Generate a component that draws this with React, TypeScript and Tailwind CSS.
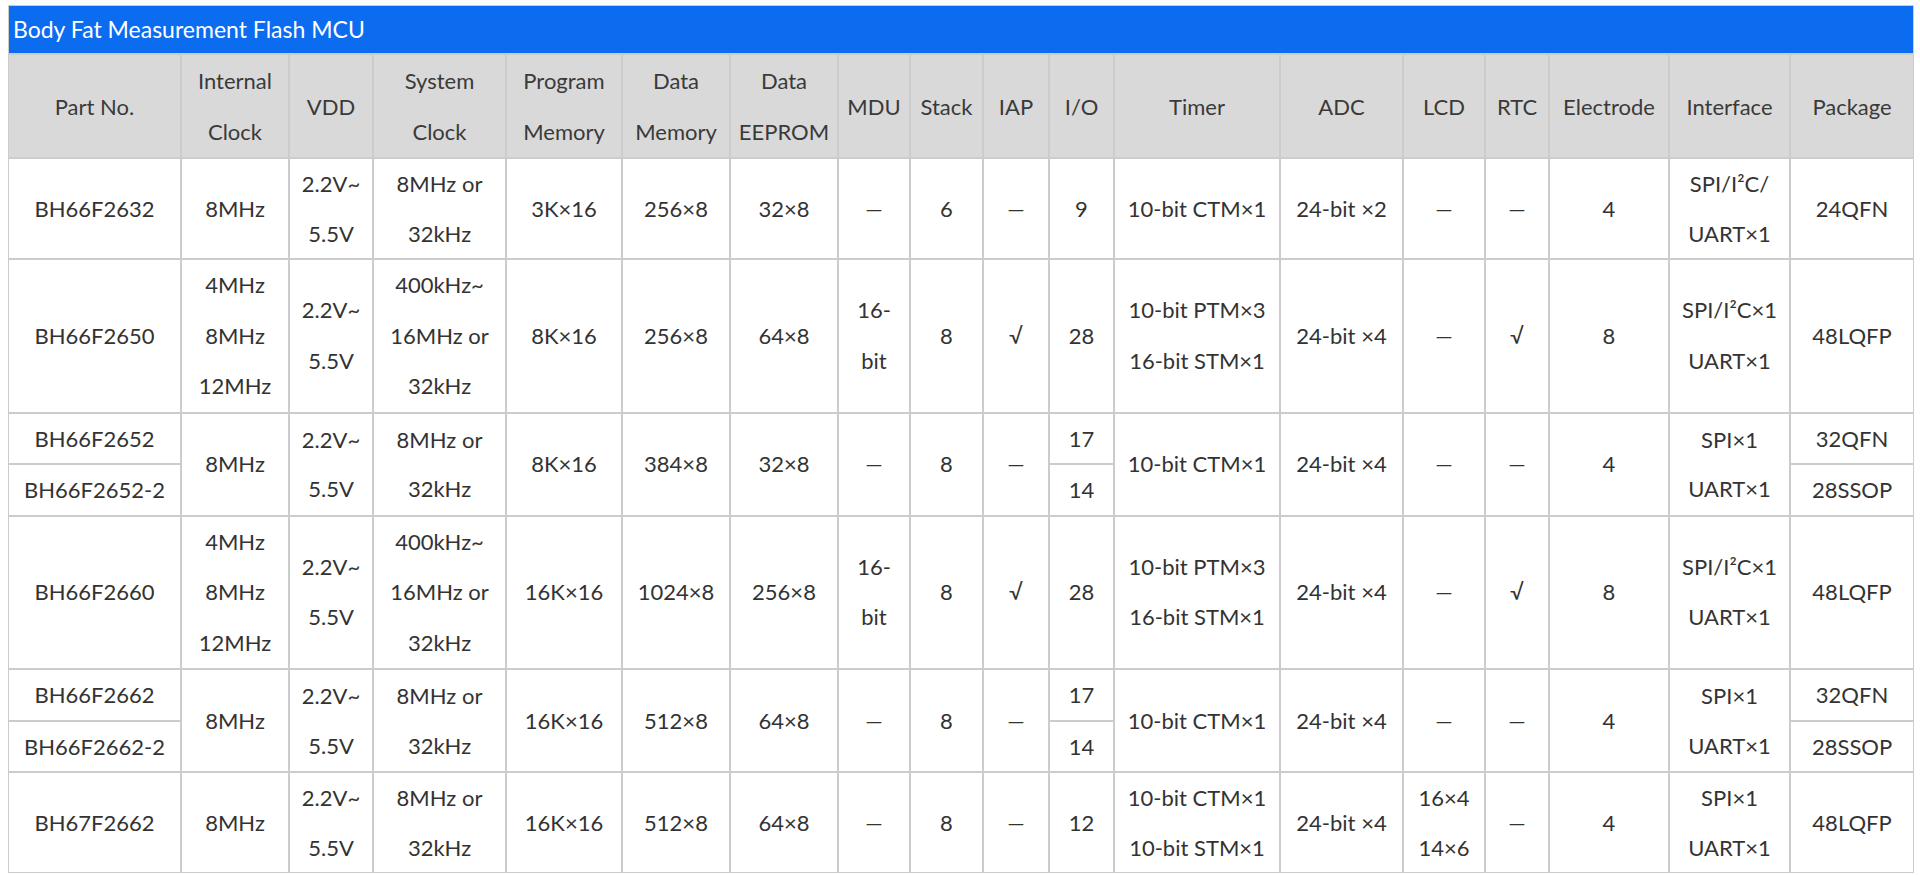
import React from 'react';

type Cell = { t: React.ReactNode; rs?: number };

const cols = [
  'w-[173px]', 'w-[108px]', 'w-[84px]', 'w-[133px]', 'w-[116px]', 'w-[108px]',
  'w-[108px]', 'w-[72px]', 'w-[73px]', 'w-[66px]', 'w-[65px]', 'w-[166px]',
  'w-[123px]', 'w-[82px]', 'w-[64px]', 'w-[120px]', 'w-[121px]', 'w-[124px]',
];

const lines = (...xs: string[]) =>
  xs.map((x, i) => (
    <React.Fragment key={i}>
      {i > 0 && <br />}
      {x}
    </React.Fragment>
  ));

const heads: React.ReactNode[] = [
  'Part No.',
  lines('Internal', 'Clock'),
  'VDD',
  lines('System', 'Clock'),
  lines('Program', 'Memory'),
  lines('Data', 'Memory'),
  lines('Data', 'EEPROM'),
  'MDU',
  'Stack',
  'IAP',
  'I/O',
  'Timer',
  'ADC',
  'LCD',
  'RTC',
  'Electrode',
  'Interface',
  'Package',
];

const D = '—';
const vdd = lines('2.2V~', '5.5V');
const slow = lines('8MHz or', '32kHz');
const fast = lines('400kHz~', '16MHz or', '32kHz');
const multi = lines('4MHz', '8MHz', '12MHz');
const pwm = lines('10-bit PTM×3', '16-bit STM×1');
const mdu = lines('16-', 'bit');

// one entry per <tr>; cells with rs span two rows
const rows: Cell[][] = [
  [
    { t: 'BH66F2632' }, { t: '8MHz' }, { t: vdd }, { t: slow }, { t: '3K×16' },
    { t: '256×8' }, { t: '32×8' }, { t: D }, { t: '6' }, { t: D }, { t: '9' },
    { t: '10-bit CTM×1' }, { t: '24-bit ×2' }, { t: D }, { t: D }, { t: '4' },
    { t: lines('SPI/I²C/', 'UART×1') }, { t: '24QFN' },
  ],
  [
    { t: 'BH66F2650' }, { t: multi }, { t: vdd }, { t: fast }, { t: '8K×16' },
    { t: '256×8' }, { t: '64×8' }, { t: mdu }, { t: '8' }, { t: '√' }, { t: '28' },
    { t: pwm }, { t: '24-bit ×4' }, { t: D }, { t: '√' }, { t: '8' },
    { t: lines('SPI/I²C×1', 'UART×1') }, { t: '48LQFP' },
  ],
  [
    { t: 'BH66F2652' }, { t: '8MHz', rs: 2 }, { t: vdd, rs: 2 }, { t: slow, rs: 2 },
    { t: '8K×16', rs: 2 }, { t: '384×8', rs: 2 }, { t: '32×8', rs: 2 }, { t: D, rs: 2 },
    { t: '8', rs: 2 }, { t: D, rs: 2 }, { t: '17' }, { t: '10-bit CTM×1', rs: 2 },
    { t: '24-bit ×4', rs: 2 }, { t: D, rs: 2 }, { t: D, rs: 2 }, { t: '4', rs: 2 },
    { t: lines('SPI×1', 'UART×1'), rs: 2 }, { t: '32QFN' },
  ],
  [{ t: 'BH66F2652-2' }, { t: '14' }, { t: '28SSOP' }],
  [
    { t: 'BH66F2660' }, { t: multi }, { t: vdd }, { t: fast }, { t: '16K×16' },
    { t: '1024×8' }, { t: '256×8' }, { t: mdu }, { t: '8' }, { t: '√' }, { t: '28' },
    { t: pwm }, { t: '24-bit ×4' }, { t: D }, { t: '√' }, { t: '8' },
    { t: lines('SPI/I²C×1', 'UART×1') }, { t: '48LQFP' },
  ],
  [
    { t: 'BH66F2662' }, { t: '8MHz', rs: 2 }, { t: vdd, rs: 2 }, { t: slow, rs: 2 },
    { t: '16K×16', rs: 2 }, { t: '512×8', rs: 2 }, { t: '64×8', rs: 2 }, { t: D, rs: 2 },
    { t: '8', rs: 2 }, { t: D, rs: 2 }, { t: '17' }, { t: '10-bit CTM×1', rs: 2 },
    { t: '24-bit ×4', rs: 2 }, { t: D, rs: 2 }, { t: D, rs: 2 }, { t: '4', rs: 2 },
    { t: lines('SPI×1', 'UART×1'), rs: 2 }, { t: '32QFN' },
  ],
  [{ t: 'BH66F2662-2' }, { t: '14' }, { t: '28SSOP' }],
  [
    { t: 'BH67F2662' }, { t: '8MHz' }, { t: vdd }, { t: slow }, { t: '16K×16' },
    { t: '512×8' }, { t: '64×8' }, { t: D }, { t: '8' }, { t: D }, { t: '12' },
    { t: lines('10-bit CTM×1', '10-bit STM×1') }, { t: '24-bit ×4' },
    { t: lines('16×4', '14×6') }, { t: D }, { t: '4' },
    { t: lines('SPI×1', 'UART×1') }, { t: '48LQFP' },
  ],
];

// the three-line rows (BH66F2650, BH66F2660) sit a touch looser
const tall = new Set([1, 4]);

const cell = 'border border-[#cccccc] p-0 text-center align-middle';

export default function App() {
  return (
    <div className="min-h-[875px] bg-white pl-2 pt-[5px] font-['Lato','Noto_Sans',sans-serif] text-[22px] text-[#333333]">
      <table className="w-[1906px] table-fixed border-separate border-spacing-0">
        <colgroup>
          {cols.map((c, i) => (
            <col key={i} className={c} />
          ))}
        </colgroup>
        <tbody>
          <tr>
            <td
              colSpan={18}
              className="border border-[#cccccc] bg-[#0c6cf0] pl-1 text-left text-[23px] leading-[47px] text-white"
            >
              Body Fat Measurement Flash MCU
            </td>
          </tr>
          <tr className="bg-[#d9d9d9]">
            {heads.map((h, i) => (
              <th key={i} className={`${cell} leading-[51px] font-normal text-[#3a3a3a]`}>
                {h}
              </th>
            ))}
          </tr>
          {rows.map((r, i) => (
            <tr key={i}>
              {r.map((c, j) => (
                <td
                  key={j}
                  rowSpan={c.rs}
                  className={`${cell} ${tall.has(i) ? 'leading-[50.5px]' : 'leading-[49.5px]'}`}
                >
                  {c.t}
                </td>
              ))}
            </tr>
          ))}
        </tbody>
      </table>
    </div>
  );
}
